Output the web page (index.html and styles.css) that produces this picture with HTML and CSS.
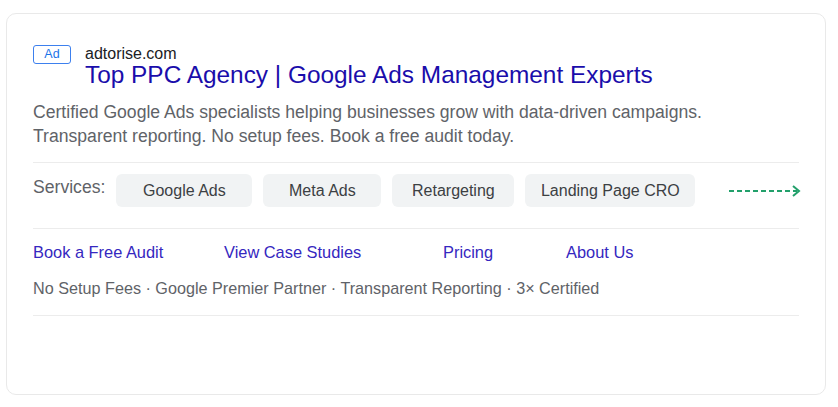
FILE: index.html
```html
<!DOCTYPE html>
<html lang="en">
<head>
<meta charset="utf-8">
<title>Ad</title>
<link rel="stylesheet" href="styles.css">
</head>
<body>
<div class="card">
  <div class="head">
    <span class="badge">Ad</span>
    <div class="head-text">
      <div class="domain">adtorise.com</div>
      <a class="title" href="#">Top PPC Agency | Google Ads Management Experts</a>
    </div>
  </div>
  <p class="desc">Certified Google Ads specialists helping businesses grow with data-driven campaigns.<br>Transparent reporting. No setup fees. Book a free audit today.</p>
  <div class="services">
    <span class="label">Services:</span>
    <span class="chip chip-google">Google Ads</span>
    <span class="chip chip-meta">Meta Ads</span>
    <span class="chip chip-retarget">Retargeting</span>
    <span class="chip chip-cro">Landing Page CRO</span>
    <svg class="arrow" width="72" height="14" viewBox="0 0 72 14">
      <line x1="0" y1="7" x2="68" y2="7" stroke="#22a06b" stroke-width="2" stroke-dasharray="5 3"/>
      <polyline points="64,2 70,7 64,12" fill="none" stroke="#22a06b" stroke-width="2"/>
    </svg>
  </div>
  <div class="links">
    <a href="#">Book a Free Audit</a>
    <a href="#">View Case Studies</a>
    <a href="#">Pricing</a>
    <a href="#">About Us</a>
  </div>
  <div class="trust">No Setup Fees · Google Premier Partner · Transparent Reporting · 3× Certified</div>
</div>
</body>
</html>
```

FILE: styles.css
```css
* { box-sizing: border-box; }
body {
  margin: 0;
  background: #fff;
  font-family: "Liberation Sans", Arial, sans-serif;
}
.card {
  margin: 13px 0 0 6px;
  width: 820px;
  height: 382px;
  border: 1px solid #e9e9e9;
  border-radius: 10px;
  padding: 31px 26px 0 26px;
}
.head {
  display: flex;
  align-items: flex-start;
  gap: 14px;
}
.badge {
  display: inline-block;
  width: 38px;
  height: 19px;
  line-height: 17px;
  text-align: center;
  border: 1px solid #3d80ee;
  border-radius: 3px;
  color: #1a73e8;
  font-size: 12.5px;
}
.head-text {
  display: flex;
  flex-direction: column;
}
.domain {
  font-size: 16px;
  line-height: 17px;
  color: #202124;
}
.title {
  font-size: 24.4px;
  line-height: 26px;
  color: #1a0dab;
  text-decoration: none;
}
.desc {
  margin: 11.5px 0 0 0;
  font-size: 17.6px;
  line-height: 24px;
  color: #5f6368;
  padding-bottom: 14.5px;
  border-bottom: 1px solid #ececec;
}
.services {
  display: flex;
  align-items: flex-start;
  gap: 11px;
  padding: 11px 0 21px 0;
  border-bottom: 1px solid #ececec;
}
.label {
  margin-top: 2.5px;
  font-size: 17.6px;
  line-height: 20px;
  color: #5f6368;
}
.chip {
  flex: none;
  height: 33px;
  padding-top: 7px;
  text-align: center;
  font-size: 16px;
  line-height: 20px;
  color: #3c4043;
  background: #f1f3f4;
  border-radius: 6px;
}
.chip-google { width: 136px; }
.chip-meta { width: 118px; }
.chip-retarget { width: 122px; }
.chip-cro { width: 170px; }
.arrow {
  margin-left: auto;
  align-self: center;
  margin-right: -2px;
}
.links {
  display: grid;
  grid-template-columns: 191px 219px 123px auto;
  padding-top: 13px;
}
.links a {
  font-size: 16.4px;
  line-height: 20px;
  color: #3527c0;
  text-decoration: none;
}
.trust {
  margin-top: 16px;
  font-size: 16.2px;
  line-height: 20px;
  color: #5f6368;
  padding-bottom: 17px;
  border-bottom: 1px solid #ececec;
}
```
